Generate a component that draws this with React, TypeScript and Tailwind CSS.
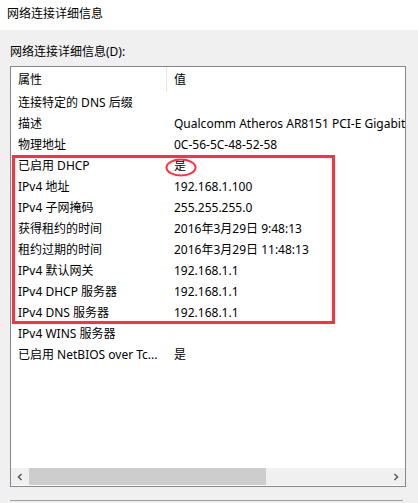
import React from 'react';

const rows: [string, string][] = [
  ['连接特定的 DNS 后缀', ''],
  ['描述', 'Qualcomm Atheros AR8151 PCI-E Gigabit Ethernet Controller (NDIS 6.30)'],
  ['物理地址', '0C-56-5C-48-52-58'],
  ['已启用 DHCP', '是'],
  ['IPv4 地址', '192.168.1.100'],
  ['IPv4 子网掩码', '255.255.255.0'],
  ['获得租约的时间', '2016年3月29日 9:48:13'],
  ['租约过期的时间', '2016年3月29日 11:48:13'],
  ['IPv4 默认网关', '192.168.1.1'],
  ['IPv4 DHCP 服务器', '192.168.1.1'],
  ['IPv4 DNS 服务器', '192.168.1.1'],
  ['IPv4 WINS 服务器', ''],
  ['已启用 NetBIOS over Tc...', '是'],
];

export default function App() {
  return (
    <div
      className="w-[418px] h-[503px] overflow-hidden bg-[#f0f0f0] text-[12px] text-black flex flex-col"
      style={{ fontFamily: '"Noto Sans", "Noto Sans CJK SC", sans-serif' }}
    >
      {/* 标题栏 */}
      <div className="h-[30px] bg-white flex items-center pl-[7px] pb-[2px] text-[12px] shrink-0">
        网络连接详细信息
      </div>

      <div className="pl-[10px] pt-[14px] h-[36px] leading-[16px] shrink-0">网络连接详细信息(D):</div>

      {/* 列表框 */}
      <div className="ml-[10px] mr-[12px] h-[421px] border border-[#828790] bg-white flex flex-col shrink-0 relative overflow-hidden">
        <div className="h-[25px] flex items-center shrink-0">
          <div className="w-[156px] pl-[7px] border-r border-[#e5e5e5] h-full flex items-center">属性</div>
          <div className="pl-[7px]">值</div>
        </div>
        {rows.map(([k, v]) => (
          <div key={k} className="h-[21px] flex items-center shrink-0 whitespace-nowrap">
            <div className="w-[156px] pl-[7px] shrink-0">{k}</div>
            <div className="pl-[7px] shrink-0">{v}</div>
          </div>
        ))}
        <div className="flex-1" />
        {/* 横向滚动条 */}
        <div className="h-[17px] mb-[1px] bg-[#f0f0f0] flex items-center shrink-0">
          <div className="w-[18px] h-full flex items-center justify-center">
            <svg width="8" height="8" viewBox="0 0 8 8">
              <path d="M5.5 1 L2.5 4 L5.5 7" fill="none" stroke="#606060" strokeWidth="1.6" />
            </svg>
          </div>
          <div className="w-[237px] h-full bg-[#cdcdcd]" />
          <div className="flex-1" />
          <div className="w-[18px] h-full flex items-center justify-center">
            <svg width="8" height="8" viewBox="0 0 8 8">
              <path d="M2.5 1 L5.5 4 L2.5 7" fill="none" stroke="#606060" strokeWidth="1.6" />
            </svg>
          </div>
        </div>

        {/* 红框标注 */}
        <div className="absolute left-[1px] top-[88px] w-[323px] h-[169px] border-[3px] border-[#ff3040] pointer-events-none" />
        <svg className="absolute left-[154px] top-[91px] pointer-events-none" width="32" height="19" viewBox="0 0 32 19">
          <ellipse cx="16" cy="9.5" rx="14.5" ry="8" fill="none" stroke="#ff3040" strokeWidth="2" />
        </svg>
      </div>

      <div className="mt-[13px] ml-[10px] w-[393px] h-px bg-[#a0a0a0] shrink-0" />
    </div>
  );
}
